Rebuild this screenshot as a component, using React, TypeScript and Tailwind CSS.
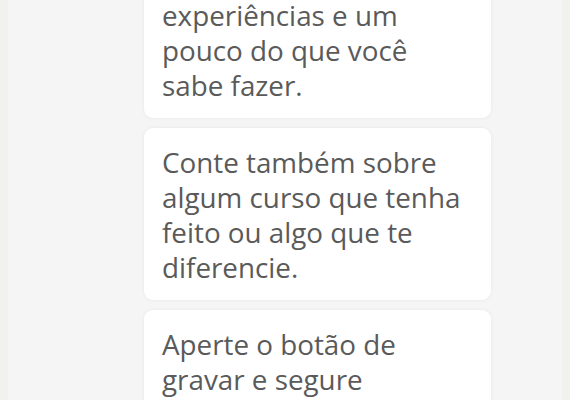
import React from "react";

const cards: string[][] = [
  ["experiências e um", "pouco do que você", "sabe fazer."],
  ["Conte também sobre", "algum curso que tenha", "feito ou algo que te", "diferencie."],
  ["Aperte o botão de", "gravar e segure", "enquanto fala."],
];

export default function App() {
  return (
    <div
      className="w-[570px] h-[400px] overflow-hidden bg-[#f1f2ee] flex"
      style={{ fontFamily: '"Open Sans", "Noto Sans", sans-serif' }}
    >
      <div className="flex-1 mx-2 bg-[#f5f5f5] flex flex-col">
        <div className="ml-[136px] w-[347px] -mt-[19px] flex flex-col gap-[10px]">
          {cards.map((lines, i) => (
            <div
              key={i}
              className="bg-white rounded-[9px] shadow-[0_0_4px_rgba(0,0,0,0.06)] pl-[18px] pr-3 pt-[17px] pb-[15px] text-[27.8px] leading-[35px] text-[#5a5a5a]"
            >
              {lines.map((l, j) => (
                <div key={j} className="whitespace-nowrap">{l}</div>
              ))}
            </div>
          ))}
        </div>
      </div>
    </div>
  );
}
